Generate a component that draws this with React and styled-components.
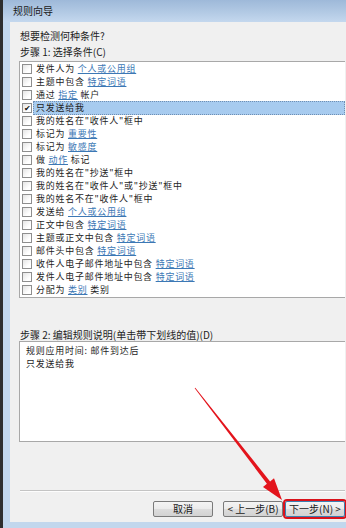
import React from "react";
import styled, { createGlobalStyle, css } from "styled-components";

const GlobalStyle = createGlobalStyle`
  html, body { margin: 0; padding: 0; }
  body {
    width: 346px;
    height: 528px;
    overflow: hidden;
    font-family: "Noto Sans CJK SC", "Noto Sans", sans-serif;
  }
`;

const Screen = styled.div`
  position: relative;
  display: flex;
  width: 346px;
  height: 528px;
  overflow: hidden;
  background: #2b2b2b;
`;

const DarkStrip = styled.div`
  flex: none;
  width: 3px;
  background: #2e2e2e;
`;

const Window = styled.div`
  flex: none;
  width: 372px;
  display: flex;
  flex-direction: column;
  background: #c2d7ed;
`;

const TitleBar = styled.div`
  flex: none;
  height: 22px;
  display: flex;
  align-items: center;
  padding-left: 10px;
  font-size: 10px;
  line-height: 12px;
  color: #1a1a1a;
  background: linear-gradient(#9eb9d9, #b4cbe5 60%, #c4d8ee);
`;

const Frame = styled.div`
  flex: 1;
  display: flex;
  padding: 0 0 6px 7px;
`;

const Body = styled.div`
  flex: 1;
  display: flex;
  flex-direction: column;
  background: #f0f0f0;
  padding: 6px 30px 0 9px;
  font-size: 10px;
  color: #1e1e1e;
`;

const Label = styled.div`
  height: ${(p) => p.$lh || 16}px;
  line-height: ${(p) => p.$lh || 16}px;
  margin-top: ${(p) => p.$mt || 0}px;
  padding-left: 1px;
  white-space: nowrap;
`;

const ListBox = styled.div`
  margin-top: 1px;
  border: 1px solid #a8a8a8;
  border-right: none;
  background: #fff;
  padding: 0 0 1px 2px;
  display: flex;
  flex-direction: column;
`;

const Row = styled.div`
  display: flex;
  align-items: center;
  height: 13px;
  line-height: 12px;
  font-size: 8.95px;
  letter-spacing: 0.8px;
`;

const Check = styled.span`
  flex: none;
  box-sizing: border-box;
  width: 10px;
  height: 10px;
  margin-right: 1px;
  border: 1px solid #8e8e8e;
  background: linear-gradient(135deg, #e4e4e4, #ffffff 70%);
  display: flex;
  align-items: center;
  justify-content: center;
  font-size: 8px;
  letter-spacing: 0;
  line-height: 1;
  color: #111;
`;

const RowText = styled.span`
  flex: 1;
  height: 13px;
  box-sizing: border-box;
  display: flex;
  align-items: center;
  padding-left: 2px;
  border: 1px dotted transparent;
  white-space: pre;
  ${(p) =>
    p.$selected &&
    css`
      background: #a7cbef;
      border-color: #6f8fb3;
      height: 14px;
    `}
`;

const Link = styled.span`
  color: #3c78b5;
  text-decoration: underline;
  text-underline-offset: 1px;
`;

const DescBox = styled.div`
  height: 101px;
  box-sizing: border-box;
  border: 1px solid #a8a8a8;
  border-right: none;
  background: #fff;
  padding: 2px 0 0 6px;
  line-height: 13px;
  font-size: 8.95px;
  letter-spacing: 0.8px;
`;

const Separator = styled.div`
  margin-top: 48px;
  margin-left: 1px;
  border-top: 1px solid #c4c4c4;
  border-bottom: 1px solid #fdfdfd;
`;

const ButtonRow = styled.div`
  display: flex;
  justify-content: flex-end;
  margin-top: 9px;
  gap: 10px;
`;

const Button = styled.div`
  box-sizing: border-box;
  width: 60px;
  height: 16px;
  display: flex;
  align-items: center;
  justify-content: center;
  border: 1px solid #7a7a7a;
  border-radius: 2px;
  background: linear-gradient(#f4f4f4, #ebebeb 50%, #dddddd 51%, #d2d2d2);
  font-size: 10px;
  line-height: 12px;
  color: #1a1a1a;
  white-space: pre;
  margin-left: ${(p) => p.$ml || 0}px;
  ${(p) =>
    p.$highlight &&
    css`
      outline: 2px solid #d9121b;
      outline-offset: 0px;
      border-color: #3c7fb1;
    `}
`;

const Overlay = styled.svg`
  position: absolute;
  left: 0;
  top: 0;
  pointer-events: none;
`;

const conditions = [
  ["发件人为 ", { l: "个人或公用组" }],
  ["主题中包含 ", { l: "特定词语" }],
  ["通过 ", { l: "指定" }, " 帐户"],
  ["只发送给我"],
  ['我的姓名在"收件人"框中'],
  ["标记为 ", { l: "重要性" }],
  ["标记为 ", { l: "敏感度" }],
  ["做 ", { l: "动作" }, " 标记"],
  ['我的姓名在"抄送"框中'],
  ['我的姓名在"收件人"或"抄送"框中'],
  ['我的姓名不在"收件人"框中'],
  ["发送给 ", { l: "个人或公用组" }],
  ["正文中包含 ", { l: "特定词语" }],
  ["主题或正文中包含 ", { l: "特定词语" }],
  ["邮件头中包含 ", { l: "特定词语" }],
  ["收件人电子邮件地址中包含 ", { l: "特定词语" }],
  ["发件人电子邮件地址中包含 ", { l: "特定词语" }],
  ["分配为 ", { l: "类别" }, " 类别"],
];

const SELECTED = 3;

export default function App() {
  return (
    <>
      <GlobalStyle />
      <Screen>
        <DarkStrip />
        <Window>
          <TitleBar>规则向导</TitleBar>
          <Frame>
            <Body>
              <Label>想要检测何种条件?</Label>
              <Label>步骤 1: 选择条件(C)</Label>
              <ListBox>
                {conditions.map((parts, i) => (
                  <Row key={i}>
                    <Check>{i === SELECTED ? "✔" : ""}</Check>
                    <RowText $selected={i === SELECTED}>
                      {parts.map((p, j) =>
                        typeof p === "string" ? (
                          <React.Fragment key={j}>{p}</React.Fragment>
                        ) : (
                          <Link key={j}>{p.l}</Link>
                        )
                      )}
                    </RowText>
                  </Row>
                ))}
              </ListBox>
              <Label $mt={30} $lh={13}>
                步骤 2: 编辑规则说明(单击带下划线的值)(D)
              </Label>
              <DescBox>
                <div>规则应用时间: 邮件到达后</div>
                <div>只发送给我</div>
              </DescBox>
              <Separator />
              <ButtonRow>
                <Button>取消</Button>
                <Button>{"< 上一步(B)"}</Button>
                <Button $ml={-8} $highlight>
                  {"下一步(N) >"}
                </Button>
              </ButtonRow>
            </Body>
          </Frame>
        </Window>
        <Overlay width="346" height="528" viewBox="0 0 346 528">
          <polygon
            points="195.3,387.8 270.1,481.4 274,478.3 282,500 263,486.9 266.9,483.8 194.7,388.2"
            fill="#e3141c"
          />
        </Overlay>
      </Screen>
    </>
  );
}
